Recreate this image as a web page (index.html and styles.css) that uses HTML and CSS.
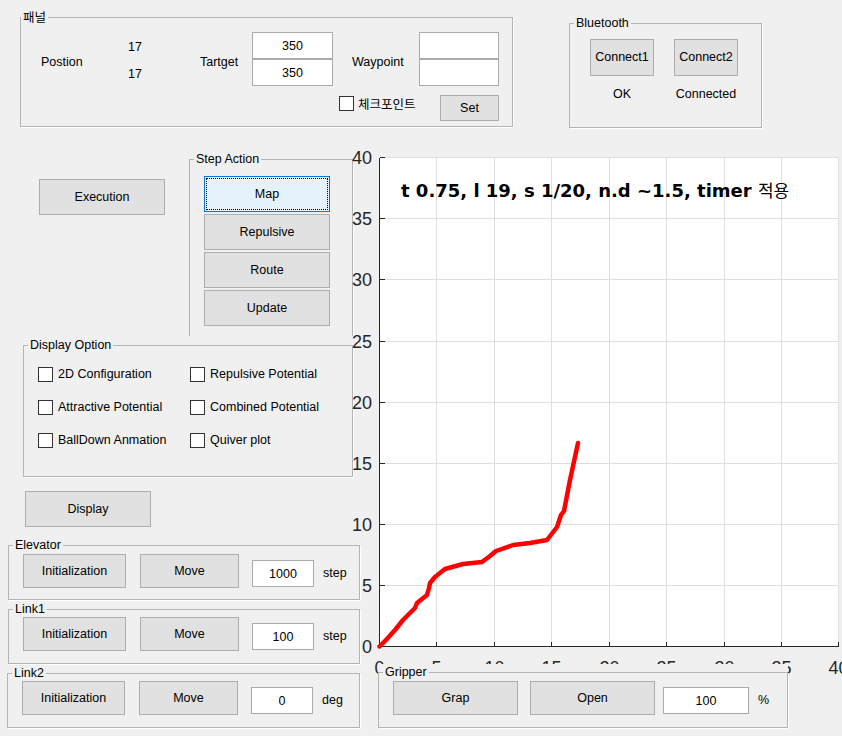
FILE: index.html
```html
<!DOCTYPE html>
<html lang="ko">
<head>
<meta charset="utf-8">
<title>Robot GUI</title>
<link rel="stylesheet" href="styles.css">
</head>
<body>
<div class="app">
  <div class="top">
    <fieldset class="group g-panel">
      <legend class="kr">패널</legend>
      <div class="p-row1">
        <div class="lbl lbl-pos">Postion</div>
        <div class="vals"><div>17</div><div>17</div></div>
        <div class="lbl lbl-tgt">Tartget</div>
        <div class="stack"><input class="txt" value="350"><input class="txt" value="350"></div>
        <div class="lbl lbl-wp">Waypoint</div>
        <div class="stack wp"><input class="txt" value=""><input class="txt" value=""></div>
      </div>
      <div class="p-row2">
        <label class="chk"><span class="box"></span><span class="kr">체크포인트</span></label>
        <button class="btn set">Set</button>
      </div>
    </fieldset>
    <fieldset class="group g-bt">
      <legend>Bluetooth</legend>
      <div class="bt-cols">
        <div class="bt-col"><button class="btn conn">Connect1</button><div class="bt-stat">OK</div></div>
        <div class="bt-col"><button class="btn conn">Connect2</button><div class="bt-stat">Connected</div></div>
      </div>
    </fieldset>
  </div>

  <div class="main">
    <div class="left">
      <div class="rowA">
        <button class="btn exec">Execution</button>
        <fieldset class="group g-step">
          <legend>Step Action</legend>
          <div class="step-btns">
            <button class="btn step focus">Map</button>
            <button class="btn step">Repulsive</button>
            <button class="btn step">Route</button>
            <button class="btn step">Update</button>
          </div>
        </fieldset>
      </div>

      <fieldset class="group g-disp">
        <legend>Display Option</legend>
        <div class="opts">
          <label class="opt"><span class="box"></span>2D Configuration</label>
          <label class="opt"><span class="box"></span>Repulsive Potential</label>
          <label class="opt"><span class="box"></span>Attractive Potential</label>
          <label class="opt"><span class="box"></span>Combined Potential</label>
          <label class="opt"><span class="box"></span>BallDown Anmation</label>
          <label class="opt"><span class="box"></span>Quiver plot</label>
        </div>
      </fieldset>

      <button class="btn disp">Display</button>

      <fieldset class="group g-elev">
        <legend>Elevator</legend>
        <div class="motor pt2">
          <button class="btn init">Initialization</button>
          <button class="btn move">Move</button>
          <input class="txt num" value="1000">
          <span class="unit">step</span>
        </div>
      </fieldset>

      <fieldset class="group g-link1">
        <legend>Link1</legend>
        <div class="motor">
          <button class="btn init">Initialization</button>
          <button class="btn move">Move</button>
          <input class="txt num" value="100">
          <span class="unit">step</span>
        </div>
      </fieldset>

      <fieldset class="group g-link2">
        <legend>Link2</legend>
        <div class="motor">
          <button class="btn init">Initialization</button>
          <button class="btn move">Move</button>
          <input class="txt num" value="0">
          <span class="unit">deg</span>
        </div>
      </fieldset>
    </div>

    <div class="right">
      <svg class="plot" width="492" height="545" viewBox="0 0 492 545">
        <rect x="29.5" y="17.5" width="459" height="489" fill="#ffffff"/>
        <g stroke="#dfdfdf" stroke-width="1" shape-rendering="crispEdges">
          <line x1="86.5" y1="17.5" x2="86.5" y2="506.5"/>
          <line x1="144.5" y1="17.5" x2="144.5" y2="506.5"/>
          <line x1="201.5" y1="17.5" x2="201.5" y2="506.5"/>
          <line x1="259.5" y1="17.5" x2="259.5" y2="506.5"/>
          <line x1="316.5" y1="17.5" x2="316.5" y2="506.5"/>
          <line x1="374.5" y1="17.5" x2="374.5" y2="506.5"/>
          <line x1="431.5" y1="17.5" x2="431.5" y2="506.5"/>
          <line x1="488.5" y1="17.5" x2="488.5" y2="506.5"/>
          <line x1="29.5" y1="445.5" x2="488.5" y2="445.5"/>
          <line x1="29.5" y1="384.5" x2="488.5" y2="384.5"/>
          <line x1="29.5" y1="323.5" x2="488.5" y2="323.5"/>
          <line x1="29.5" y1="262.5" x2="488.5" y2="262.5"/>
          <line x1="29.5" y1="201.5" x2="488.5" y2="201.5"/>
          <line x1="29.5" y1="139.5" x2="488.5" y2="139.5"/>
          <line x1="29.5" y1="78.5" x2="488.5" y2="78.5"/>
          <line x1="29.5" y1="17.5" x2="488.5" y2="17.5"/>
        </g>
        <g stroke="#262626" stroke-width="1" shape-rendering="crispEdges">
          <line x1="29.5" y1="17.5" x2="29.5" y2="507"/>
          <line x1="29" y1="506.5" x2="488.5" y2="506.5"/>
          <line x1="29.5" y1="17.5" x2="34.5" y2="17.5"/>
          <line x1="29.5" y1="78.5" x2="34.5" y2="78.5"/>
          <line x1="29.5" y1="139.5" x2="34.5" y2="139.5"/>
          <line x1="29.5" y1="201.5" x2="34.5" y2="201.5"/>
          <line x1="29.5" y1="262.5" x2="34.5" y2="262.5"/>
          <line x1="29.5" y1="323.5" x2="34.5" y2="323.5"/>
          <line x1="29.5" y1="384.5" x2="34.5" y2="384.5"/>
          <line x1="29.5" y1="445.5" x2="34.5" y2="445.5"/>
          <line x1="86.5" y1="506.5" x2="86.5" y2="501.5"/>
          <line x1="144.5" y1="506.5" x2="144.5" y2="501.5"/>
          <line x1="201.5" y1="506.5" x2="201.5" y2="501.5"/>
          <line x1="259.5" y1="506.5" x2="259.5" y2="501.5"/>
          <line x1="316.5" y1="506.5" x2="316.5" y2="501.5"/>
          <line x1="374.5" y1="506.5" x2="374.5" y2="501.5"/>
          <line x1="431.5" y1="506.5" x2="431.5" y2="501.5"/>
          <line x1="488.5" y1="506.5" x2="488.5" y2="501.5"/>
        </g>
        <g class="ticklbl" text-anchor="end">
          <text x="22" y="24">40</text>
          <text x="22" y="85">35</text>
          <text x="22" y="146">30</text>
          <text x="22" y="208">25</text>
          <text x="22" y="269">20</text>
          <text x="22" y="330">15</text>
          <text x="22" y="391">10</text>
          <text x="22" y="452">5</text>
          <text x="22" y="513">0</text>
        </g>
        <g class="ticklbl" text-anchor="middle">
          <text x="29.5" y="534">0</text>
          <text x="86.5" y="534">5</text>
          <text x="144.5" y="534">10</text>
          <text x="201.5" y="534">15</text>
          <text x="259.5" y="534">20</text>
          <text x="316.5" y="534">25</text>
          <text x="374.5" y="534">30</text>
          <text x="431.5" y="534">35</text>
          <text x="488.5" y="534">40</text>
        </g>
        <polyline fill="none" stroke="#ff0000" stroke-width="4.5" stroke-linejoin="round" stroke-linecap="round"
          points="29.5,506.5 36,500 45,490 53,480 60,473 65,468 67,463 77,455 79,448 80,443 85,437 95,429 113,424 132,422 140,416 146,411 163,405 180,403 197,400 207,387 211,375 214,371 220,340 228,303"/>
        <text class="ptitle" x="51" y="57">t 0.75, l 19, s 1/20, n.d ~1.5, timer <tspan class="ptitle-kr">적용</tspan></text>
      </svg>

      <div class="grip-wrap">
        <fieldset class="group g-grip">
          <legend>Gripper</legend>
          <div class="grip">
            <button class="btn gbtn">Grap</button>
            <button class="btn gbtn open">Open</button>
            <input class="txt gnum" value="100">
            <span class="unit pct">%</span>
          </div>
        </fieldset>
      </div>
    </div>
  </div>
</div>
</body>
</html>
```

FILE: styles.css
```css
* { box-sizing: border-box; }

html, body { margin: 0; padding: 0; }

body {
  background: #f0f0f0;
  font: 12.5px/15px "Liberation Sans", "Noto Sans CJK KR", sans-serif;
  color: #000;
  width: 842px;
  height: 736px;
  overflow: hidden;
}

.kr { font-family: "Noto Sans CJK KR", "Liberation Sans", sans-serif; }

/* group boxes */
.group {
  margin: 0;
  padding: 0;
  min-width: 0;
  border: 1px solid #b4b4b4;
  box-shadow: 1px 1px 0 #ffffff;
}
.group > legend {
  padding: 0 2px;
  margin-left: 4px;
  height: 14px;
  line-height: 14px;
  font-size: 12.5px;
}
.g-panel > legend { margin-left: 0; }

/* generic controls */
.btn {
  display: block;
  flex: none;
  padding: 0;
  margin: 0;
  font: inherit;
  color: #000;
  background: #e1e1e1;
  border: 1px solid #adadad;
  text-align: center;
}
.btn.focus {
  background: #e5f1fb;
  border-color: #0078d7;
  outline: 1px dotted #000;
  outline-offset: -3px;
}
.txt {
  display: block;
  flex: none;
  margin: 0;
  padding: 0;
  font: inherit;
  color: #000;
  background: #fff;
  border: 1px solid #ababab;
  text-align: center;
  height: 27px;
  width: 100%;
}
.box {
  flex: none;
  width: 15px;
  height: 15px;
  background: #fff;
  border: 1px solid #333;
}

/* top row */
.top {
  display: flex;
  align-items: flex-start;
  height: 140px;
}
.g-panel {
  flex: none;
  margin: 10px 0 0 20px;
  width: 493px;
  height: 117px;
}
.p-row1 {
  display: flex;
  align-items: center;
  margin-top: 8px;
  height: 54px;
}
.lbl { flex: none; padding-top: 7px; }
.lbl-pos { margin-left: 20px; width: 87px; }
.vals { flex: none; width: 72px; padding-top: 3px; }
.vals div { line-height: 27px; }
.lbl-tgt { width: 52px; }
.stack { flex: none; display: flex; flex-direction: column; width: 81px; }
.lbl-wp { margin-left: 19px; width: 67px; }
.stack.wp { width: 80px; }
.p-row2 {
  display: flex;
  align-items: flex-start;
  height: 35px;
}
.chk {
  display: flex;
  align-items: center;
  gap: 4px;
  margin: 10px 0 0 318px;
}
.set {
  margin: 9px 13px 0 auto;
  width: 59px;
  height: 26px;
}

.g-bt {
  flex: none;
  margin: 16px 0 0 56px;
  width: 193px;
  height: 112px;
}
.bt-cols {
  display: flex;
  gap: 20px;
  padding: 9px 0 0 20px;
}
.conn { width: 64px; height: 37px; }
.bt-stat { text-align: center; margin-top: 11px; line-height: 15px; white-space: nowrap; }

/* main area */
.main {
  display: grid;
  grid-template-columns: 350px 492px;
}
.rowA { display: flex; align-items: flex-start; }
.exec { margin: 39px 0 0 39px; width: 126px; height: 36px; }
.g-step {
  flex: none;
  margin: 12px 0 0 24px;
  width: 164px;
  height: 184px;
  border-bottom: none;
  box-shadow: 1px 0 0 #fff;
}
.step-btns {
  display: flex;
  flex-direction: column;
  gap: 2px;
  padding: 10px 0 0 14px;
}
.step { width: 126px; height: 36px; }

.g-disp {
  margin: 2px 0 0 23px;
  width: 330px;
  height: 139px;
}
.opts {
  display: grid;
  grid-template-columns: 152px 150px;
  grid-auto-rows: 33px;
  padding: 6px 0 0 14px;
}
.opt { display: flex; align-items: center; gap: 5px; white-space: nowrap; }

.disp { margin: 14px 0 0 25px; width: 126px; height: 36px; }

.g-elev { margin: 11px 0 0 8px; width: 352px; height: 62px; }
.g-link1 { margin: 2px 0 0 8px; width: 352px; height: 62px; }
.g-link2 { margin: 2px 0 0 7px; width: 353px; height: 62px; }
.motor {
  display: flex;
  align-items: flex-start;
  padding: 1px 0 0 14px;
}
.motor.pt2 { padding-top: 2px; }
.init { width: 103px; height: 34px; }
.move { margin-left: 14px; width: 99px; height: 34px; }
.num { margin: 6px 0 0 13px; width: 62px; }
.unit { margin: 12px 0 0 9px; line-height: 15px; }

/* plot */
.right { position: relative; }
.plot { display: block; overflow: visible; }
.ticklbl text {
  font-family: "Liberation Sans", sans-serif;
  font-size: 18px;
  fill: #262626;
}
.ptitle {
  font-family: "DejaVu Sans", sans-serif;
  font-weight: bold;
  font-size: 18px;
  fill: #000;
}
.ptitle-kr {
  font-family: "Noto Sans CJK KR", sans-serif;
  font-weight: normal;
  font-size: 17px;
}

.grip-wrap {
  position: relative;
  margin: -21px 0 0 28px;
  width: 410px;
  padding-top: 1px;
  background: #f0f0f0;
}
.g-grip { width: 410px; height: 63px; }
.grip {
  display: flex;
  align-items: flex-start;
  padding: 2px 0 0 14px;
}
.gbtn { width: 125px; height: 34px; }
.gbtn.open { margin-left: 12px; }
.gnum { margin: 6px 0 0 8px; width: 86px; }
.pct { margin-left: 9px; }
```
